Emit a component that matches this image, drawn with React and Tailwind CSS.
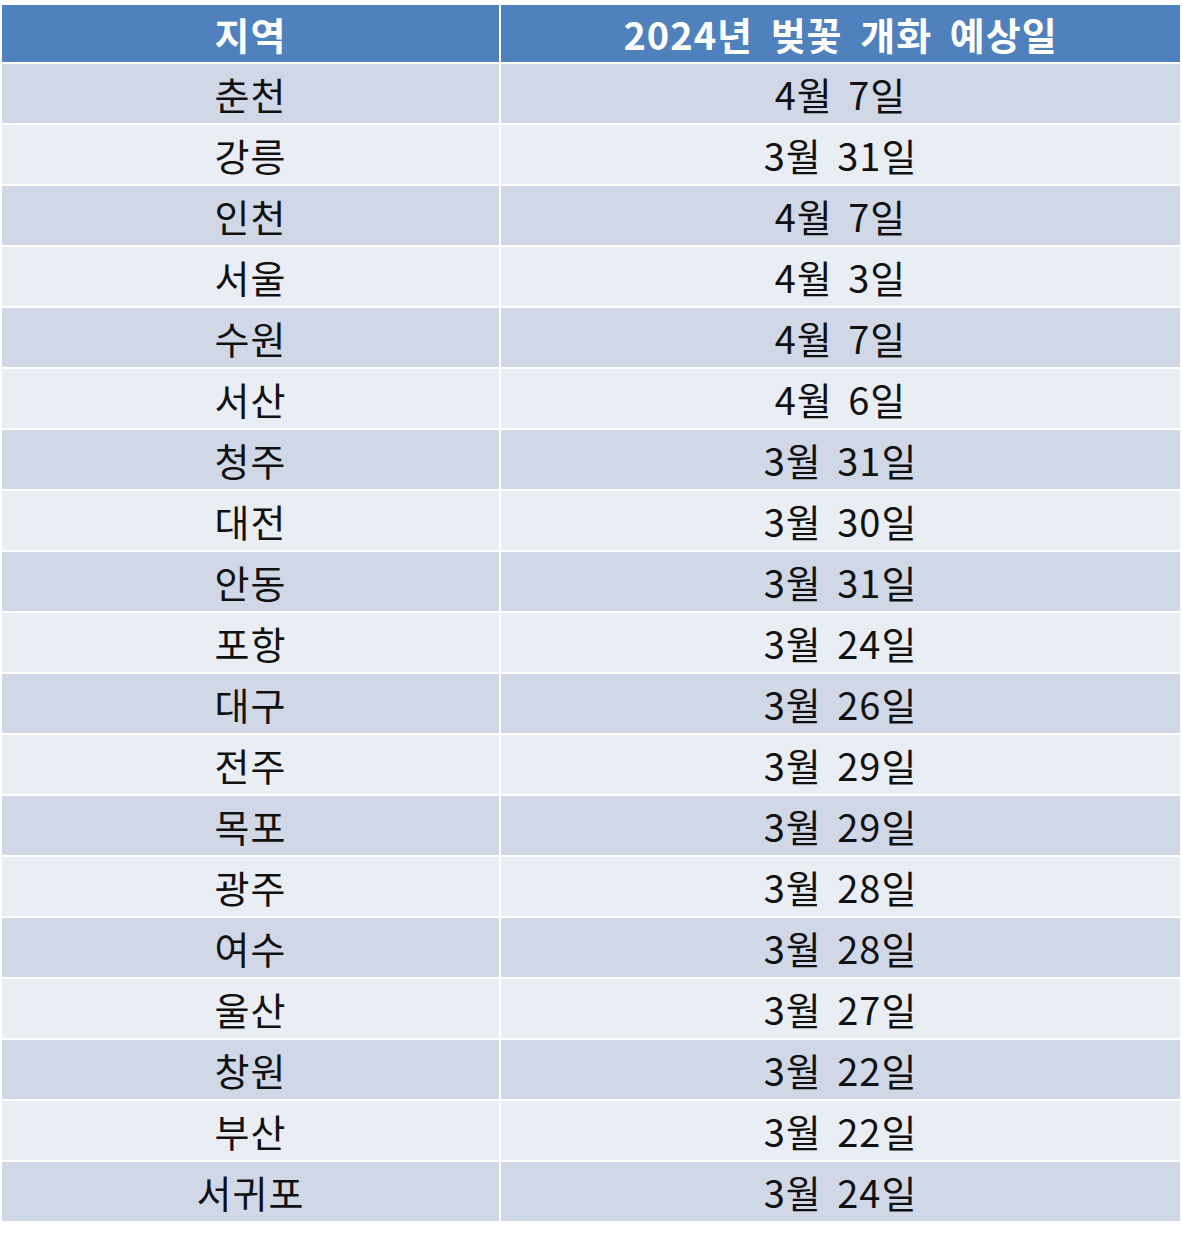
import React from "react";

const rows = [
  ["춘천", "4월 7일"],
  ["강릉", "3월 31일"],
  ["인천", "4월 7일"],
  ["서울", "4월 3일"],
  ["수원", "4월 7일"],
  ["서산", "4월 6일"],
  ["청주", "3월 31일"],
  ["대전", "3월 30일"],
  ["안동", "3월 31일"],
  ["포항", "3월 24일"],
  ["대구", "3월 26일"],
  ["전주", "3월 29일"],
  ["목포", "3월 29일"],
  ["광주", "3월 28일"],
  ["여수", "3월 28일"],
  ["울산", "3월 27일"],
  ["창원", "3월 22일"],
  ["부산", "3월 22일"],
  ["서귀포", "3월 24일"],
];

const font = {
  fontFamily: '"Noto Sans CJK KR", "Noto Sans", sans-serif',
};

export default function App() {
  return (
    <div className="w-[1182px] h-[1237px] bg-white pt-[5px] pl-[2px]" style={font}>
      <div className="grid grid-cols-[497px_679px] gap-[2px] w-[1178px]">
        {/* Header */}
        <div className="h-[57px] bg-[#4f81bd] flex items-center justify-center text-white font-bold text-[38px] tracking-[1px]">
          지역
        </div>
        <div className="h-[57px] bg-[#4f81bd] flex items-center justify-center text-white font-bold text-[38px] tracking-[1px] [word-spacing:8px]">
          2024년 벚꽃 개화 예상일
        </div>

        {/* Rows */}
        {rows.map(([region, date], i) => {
          const bg = i % 2 === 0 ? "bg-[#d0d8e8]" : "bg-[#e9edf4]";
          return (
            <React.Fragment key={region}>
              <div className={`h-[59px] ${bg} flex items-center justify-center text-[38px] tracking-[1px] text-[#111]`}>
                {region}
              </div>
              <div className={`h-[59px] ${bg} flex items-center justify-center text-[38px] tracking-[1px] [word-spacing:6px] text-[#111]`}>
                {date}
              </div>
            </React.Fragment>
          );
        })}
      </div>
    </div>
  );
}
